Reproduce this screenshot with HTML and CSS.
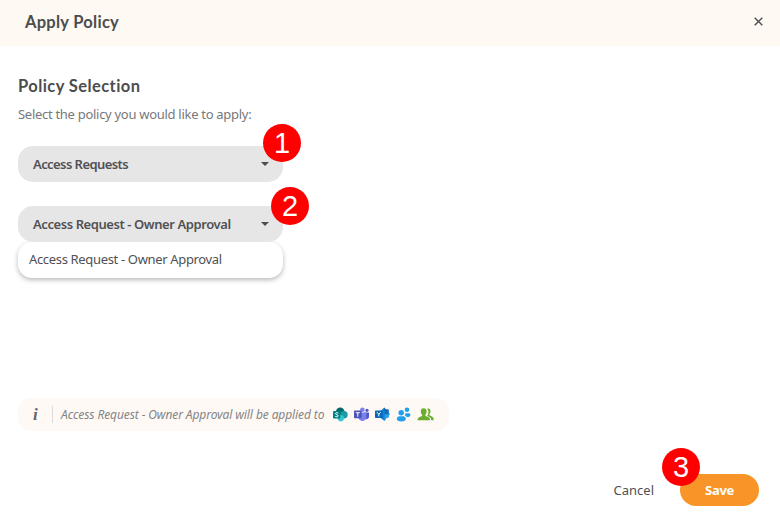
FILE: index.html
```
<!DOCTYPE html>
<html lang="en">
<head>
<meta charset="utf-8">
<title>Apply Policy</title>
<link rel="stylesheet" href="styles.css">
</head>
<body>
<div class="dialog">
  <header class="header">
    <h1 class="title">Apply Policy</h1>
    <svg class="close" viewBox="0 0 9 9" width="9" height="9"><path d="M.7.7l7.6 7.6M8.3.7L.7 8.3" stroke="#4c4d4f" stroke-width="1.4"/></svg>
  </header>
  <main class="content">
    <h2 class="section-title">Policy Selection</h2>
    <p class="hint">Select the policy you would like to apply:</p>
    <div class="select">
      <span class="value value-type">Access Requests</span>
      <svg class="caret" viewBox="0 0 8 4" width="8" height="4"><path d="M0 0h8L4 4z" fill="#4c4d4f"/></svg>
      <span class="badge badge-one">1</span>
    </div>
    <div class="select select-open">
      <span class="value value-policy">Access Request - Owner Approval</span>
      <svg class="caret" viewBox="0 0 8 4" width="8" height="4"><path d="M0 0h8L4 4z" fill="#4c4d4f"/></svg>
      <span class="badge badge-two">2</span>
    </div>
    <div class="menu"><span class="option">Access Request - Owner Approval</span></div>
    <div class="info">
      <span class="info-mark">i</span>
      <span class="info-text">Access Request - Owner Approval will be applied to</span>
      <span class="apps">
        <svg viewBox="0 0 15 15" width="15" height="15"><circle cx="7.2" cy="4.8" r="4.3" fill="#03686c"/><circle cx="11" cy="7.8" r="3.7" fill="#1a9ba1"/><circle cx="7.8" cy="11.2" r="3.1" fill="#37c6d0"/><rect y="4" width="7.4" height="7.4" rx=".7" fill="#038387"/><path d="M5.2 6.1C3.8 5.4 2.5 5.8 2.5 6.7c0 1.2 2.7.8 2.7 2.1 0 1-1.6 1.2-2.9.6" fill="none" stroke="#fff" stroke-width="1"/></svg>
        <svg viewBox="0 0 15 15" width="15" height="15"><circle cx="8.4" cy="2.7" r="2.3" fill="#7b83eb"/><circle cx="13" cy="3.3" r="1.6" fill="#5059c9"/><path d="M10 5.5h5v4.2a2.6 2.6 0 0 1-4.6 1.6z" fill="#5059c9"/><path d="M4.5 5.5h7.8v4.8a4 4 0 0 1-7.8 1z" fill="#7b83eb"/><rect y="3.6" width="7.6" height="7.6" rx=".7" fill="#4b53bc"/><path d="M1.8 5.7h4M3.8 5.7v4" stroke="#fff" stroke-width="1"/></svg>
        <svg viewBox="0 0 15 15" width="15" height="15"><path d="M9.2.5l1.8 2h2.6v3l1.2 1.6-1.2 1.6v1.9h-1.8L9.4 14 4.5 10V5z" fill="#1482d4"/><path d="M9.2.5l1.8 2h2.6v3.7l-3.9 1.2z" fill="#0f6cbd"/><path d="M9.7 7.4l5.1-.3-1.2 1.6v1.9h-1.8L9.4 14z" fill="#28a0e8"/><rect y="3.4" width="7.6" height="7.6" rx=".7" fill="#0869b5"/><path d="M2 5.2l1.8 2.2 1.8-2.2M3.8 7.4v2" fill="none" stroke="#fff" stroke-width="1"/></svg>
        <svg viewBox="0 0 15 15" width="15" height="15" fill="#219fec"><circle cx="5.2" cy="5.8" r="2.7"/><path d="M.8 12.2C.8 10 2.2 9.3 3.5 9.3h3.7c1.5 0 2.6.9 2.6 2.9 0 .9-1.7 2.2-4.5 2.2S.8 13.1.8 12.2z"/><circle cx="11" cy="2.8" r="2.3"/><path d="M9.2 6.2h3.6c1 0 1.6.6 1.6 1.7 0 1.5-1.6 2.2-3.7 2.2-.5-.8-1.2-1.3-2-1.5.5-.7.8-1.4.5-2.4z"/></svg>
        <svg viewBox="0 0 18 15" width="18" height="15" fill="#6aad2f"><path d="M6.6 1.3c2.3 0 3.2 1.5 3 3.7-.1 1.4-.7 2.1-1.2 2.8v1.1c1.5.8 4.2 1.1 4.5 2.8l.1 1.6H.5c0-3.5 2.8-3.4 4.6-4.4V7.8C4.5 7.1 3.9 6.3 3.8 5c-.2-2.2.7-3.7 2.8-3.7z"/><path d="M10.1 1.7c2-.8 3.6.6 3.4 2.9-.1 1.3-.6 2-1.1 2.7v1c1.5.8 3.8 1.2 4.2 3.3v1.7h-2.3c-.1-2.7-1.8-3.4-4.2-4.3.9-1.1 1.4-2.4 1.3-4.2 0-1.3-.5-2.3-1.3-3.1z"/></svg>
      </span>
    </div>
  </main>
  <footer class="footer">
    <span class="cancel">Cancel</span>
    <div class="save"><span>Save</span><span class="badge badge-three">3</span></div>
  </footer>
</div>
</body>
</html>
```
FILE: styles.css
```
* { box-sizing: border-box; }
body { margin: 0; background: #fff; color: #505154; font: 13px/20px "Noto Sans", sans-serif; }
.dialog { width: 780px; height: 517px; display: flex; flex-direction: column; overflow: hidden; }
.header { height: 46px; flex: none; background: #fef9f3; display: flex; align-items: center; justify-content: space-between; padding: 0 17px 3px 25px; }
.title, .section-title { margin: 0; font: 700 16.5px/20px Lato, sans-serif; color: #4c4d4f; white-space: nowrap; }
.title { letter-spacing: .27px; }
.close { display: block; }
.content { flex: 1; padding: 30px 18px 0; }
.section-title { letter-spacing: .42px; }
.hint { margin: 8px 0 22px; color: #77787a; letter-spacing: -.29px; white-space: nowrap; }
.select { position: relative; width: 265px; height: 36px; margin-bottom: 24px; border-radius: 15px; background: #e6e6e6; display: flex; align-items: center; justify-content: space-between; padding: 0 14px 0 15px; }
.select-open { margin-bottom: 0; }
.value { font-weight: 600; white-space: nowrap; }
.value-type { letter-spacing: -.57px; }
.value-policy { letter-spacing: -.42px; }
.badge { position: absolute; width: 38px; height: 38px; border-radius: 50%; background: #f00; color: #fff; text-align: center; font: 400 29px/38px "Liberation Sans", sans-serif; letter-spacing: 0; }
.badge-one { left: 245px; top: -22px; }
.badge-two { left: 253px; top: -19px; }
.badge-three { left: -18px; top: -26px; }
.menu { width: 265px; height: 36px; padding: 7px 11px; border-radius: 14px; background: #fff; box-shadow: 0 2px 5px rgba(0,0,0,.28); white-space: nowrap; }
.option { letter-spacing: -.34px; }
.info { width: 431px; height: 33px; margin-top: 120px; padding-left: 15px; border-radius: 13px; background: #fef9f5; display: flex; align-items: center; }
.info-mark { width: 20px; height: 17px; border-right: 1px solid #dedbd8; font: italic 700 17px/17px "Liberation Serif", serif; color: #666; }
.info-text { width: 280px; padding-left: 8px; font-size: 12px; font-style: italic; color: #858585; letter-spacing: -.1px; white-space: nowrap; }
.apps { display: flex; gap: 6px; align-items: center; }
.apps svg { display: block; }
.footer { height: 43px; flex: none; display: flex; justify-content: flex-end; padding-right: 21px; }
.cancel { line-height: 32px; margin-right: 26px; }
.save { position: relative; width: 79px; height: 32px; border-radius: 16px; background: #f99528; color: #fff; font-weight: 700; line-height: 32px; text-align: center; letter-spacing: -.3px; }
```
